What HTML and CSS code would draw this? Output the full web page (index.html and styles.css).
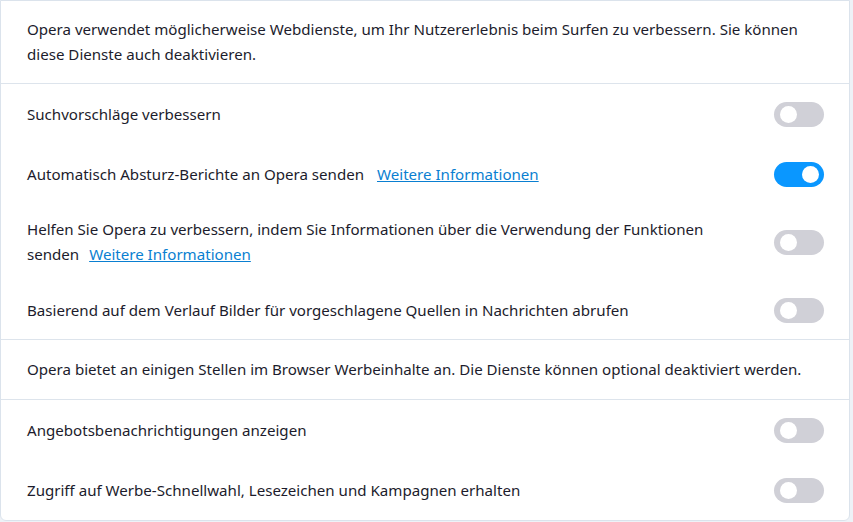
FILE: index.html
```html
<!DOCTYPE html>
<html lang="de">
<head>
<meta charset="utf-8">
<link rel="stylesheet" href="styles.css">
</head>
<body>
<div class="card">
  <div class="notice notice-first">Opera verwendet möglicherweise Webdienste, um Ihr Nutzererlebnis beim Surfen zu verbessern. Sie können diese Dienste auch deaktivieren.</div>
  <div class="row">
    <div class="label">Suchvorschläge verbessern</div>
    <span class="toggle"><span class="knob"></span></span>
  </div>
  <div class="row">
    <div class="label">Automatisch Absturz-Berichte an Opera senden <a class="link link-wide" href="#">Weitere Informationen</a></div>
    <span class="toggle on"><span class="knob"></span></span>
  </div>
  <div class="row">
    <div class="label label-narrow"><span>Helfen Sie Opera zu verbessern, indem Sie Informationen über die Verwendung der Funktionen</span> <span>senden</span> <a class="link" href="#">Weitere Informationen</a></div>
    <span class="toggle"><span class="knob"></span></span>
  </div>
  <div class="row row-last">
    <div class="label">Basierend auf dem Verlauf Bilder für vorgeschlagene Quellen in Nachrichten abrufen</div>
    <span class="toggle"><span class="knob"></span></span>
  </div>
  <div class="notice notice-second">Opera bietet an einigen Stellen im Browser Werbeinhalte an. Die Dienste können optional deaktiviert werden.</div>
  <div class="row">
    <div class="label">Angebotsbenachrichtigungen anzeigen</div>
    <span class="toggle"><span class="knob"></span></span>
  </div>
  <div class="row">
    <div class="label">Zugriff auf Werbe-Schnellwahl, Lesezeichen und Kampagnen erhalten</div>
    <span class="toggle"><span class="knob"></span></span>
  </div>
</div>
</body>
</html>
```
FILE: styles.css
```css
html, body {
  margin: 0;
  padding: 0;
  background: #eef2f7;
}
body {
  font-family: "Noto Sans", "Open Sans", sans-serif;
  font-size: 15.1px;
  line-height: 25px;
  color: #1c1c2c;
}
.card {
  width: 848px;
  background: #ffffff;
  border: 1px solid #dbe3ec;
  border-radius: 0 0 6px 6px;
}
.notice {
  box-sizing: border-box;
  display: flex;
  align-items: center;
  padding: 16px 40px 16px 26px;
  border-bottom: 1px solid #dde4ec;
}
.notice-second {
  min-height: 61px;
  padding: 0 26px;
  border-top: 1px solid #dde4ec;
}
.row {
  min-height: 60px;
  box-sizing: border-box;
  display: flex;
  align-items: center;
  justify-content: space-between;
  padding: 13px 25px 13px 26px;
}
.row-last {
  min-height: 59px;
  padding-bottom: 12px;
}
.label {
  flex: 1;
}
.label-narrow {
  max-width: 700px;
}
.link {
  color: #0a7fd1;
  text-decoration: underline;
  margin-left: 6px;
}
.link-wide {
  margin-left: 9px;
}
.toggle {
  flex: none;
  width: 50px;
  height: 25px;
  border-radius: 13px;
  background: #d0d0d7;
  display: flex;
  align-items: center;
  padding: 0 5px 0 6px;
  box-sizing: border-box;
}
.knob {
  width: 17px;
  height: 17px;
  border-radius: 50%;
  background: #ffffff;
}
.toggle.on {
  background: #0a97ff;
  justify-content: flex-end;
}
```
